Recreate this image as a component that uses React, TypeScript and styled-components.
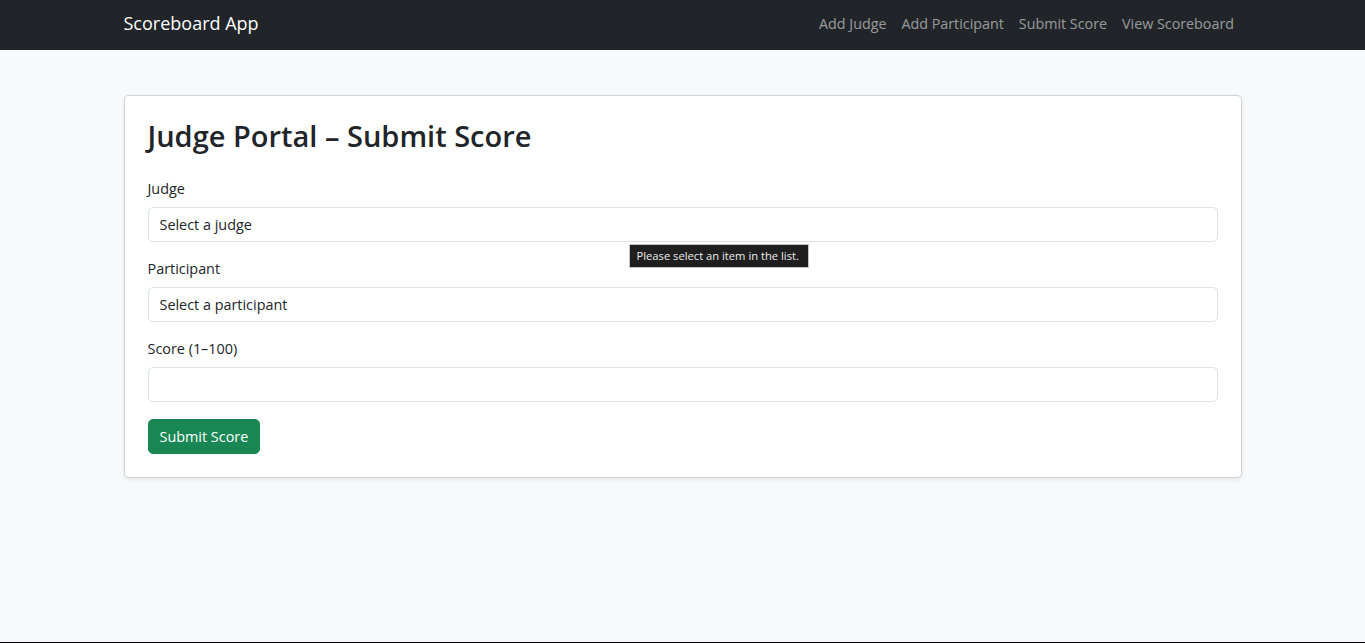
import React from "react";
import styled, { createGlobalStyle } from "styled-components";

const FONT = `"Open Sans", "Noto Sans", "Liberation Sans", sans-serif`;

const GlobalStyle = createGlobalStyle`
  * { box-sizing: border-box; }
  html, body { margin: 0; padding: 0; }
  body {
    background: #f8f9fa;
    font-family: ${FONT};
    color: #212529;
  }
`;

const Page = styled.div`
  min-height: 643px;
  border-bottom: 1px solid #000;
  background: #f8f9fa;
  display: flex;
  flex-direction: column;
`;

const NavBar = styled.nav`
  height: 50px;
  background: #212529;
  display: flex;
  justify-content: center;
`;

const NavInner = styled.div`
  width: 1142px;
  padding: 0 12px;
  display: flex;
  align-items: center;
  justify-content: space-between;
`;

const Brand = styled.a`
  color: #fff;
  font-size: 18px;
  line-height: 28px;
  text-decoration: none;
  margin-top: -4px;
`;

const NavLinks = styled.ul`
  list-style: none;
  margin: -2px 0 0 0;
  padding: 0;
  display: flex;
`;

const NavLink = styled.a`
  display: block;
  padding: 0 7.5px;
  font-size: 14.3px;
  line-height: 22px;
  color: rgba(255, 255, 255, 0.55);
  text-decoration: none;
`;

const Main = styled.main`
  display: flex;
  justify-content: center;
  padding-top: 45px;
`;

const Container = styled.div`
  width: 1142px;
  padding: 0 12px;
`;

const Card = styled.div`
  background: #fff;
  border: 1px solid rgba(0, 0, 0, 0.175);
  border-radius: 5px;
  box-shadow: 0 2px 4px rgba(0, 0, 0, 0.075);
  padding: 22px 23px 23px;
`;

const Title = styled.h2`
  margin: 0 0 25px;
  font-size: 29px;
  line-height: 35px;
  font-weight: 600;
  color: #212529;
`;

const Group = styled.div`
  margin-bottom: 16px;
  position: relative;
`;

const Label = styled.label`
  display: block;
  font-size: 14.4px;
  line-height: 22px;
  margin-bottom: 7px;
  color: #212529;
`;

const fieldCss = `
  display: block;
  width: 100%;
  height: 35px;
  padding: 0 11px;
  font-family: ${FONT};
  font-size: 14.4px;
  color: #212529;
  background: #fff;
  border: 1px solid #dee2e6;
  border-radius: 5px;
  outline: none;
  appearance: none;
  -webkit-appearance: none;
  -moz-appearance: textfield;
`;

const Select = styled.select`
  ${fieldCss}
`;

const Input = styled.input`
  ${fieldCss}
  &::-webkit-outer-spin-button,
  &::-webkit-inner-spin-button {
    -webkit-appearance: none;
    margin: 0;
  }
`;

const Tooltip = styled.div`
  position: absolute;
  left: 481px;
  top: 66px;
  width: 180px;
  height: 24px;
  background: #1f1f1f;
  border: 1px solid #c4c4c4;
  color: #ececec;
  font-size: 11.2px;
  line-height: 22px;
  padding: 0 7px;
  white-space: nowrap;
  z-index: 2;
`;

const SubmitButton = styled.button`
  height: 35px;
  margin-top: 1px;
  padding: 0 11px;
  font-family: ${FONT};
  font-size: 14.4px;
  color: #fff;
  background: #198754;
  border: 1px solid #198754;
  border-radius: 5px;
  cursor: pointer;
`;

const links = ["Add Judge", "Add Participant", "Submit Score", "View Scoreboard"];

export default function App() {
  return (
    <>
      <GlobalStyle />
      <Page>
        <NavBar>
          <NavInner>
            <Brand href="#">Scoreboard App</Brand>
            <NavLinks>
              {links.map((l) => (
                <li key={l}>
                  <NavLink href="#">{l}</NavLink>
                </li>
              ))}
            </NavLinks>
          </NavInner>
        </NavBar>
        <Main>
          <Container>
            <Card>
              <Title>Judge Portal – Submit Score</Title>
              <form onSubmit={(e) => e.preventDefault()}>
                <Group>
                  <Label>Judge</Label>
                  <Select defaultValue="">
                    <option value="">Select a judge</option>
                  </Select>
                  <Tooltip>Please select an item in the list.</Tooltip>
                </Group>
                <Group>
                  <Label>Participant</Label>
                  <Select defaultValue="">
                    <option value="">Select a participant</option>
                  </Select>
                </Group>
                <Group>
                  <Label>Score (1–100)</Label>
                  <Input type="number" />
                </Group>
                <SubmitButton type="submit">Submit Score</SubmitButton>
              </form>
            </Card>
          </Container>
        </Main>
      </Page>
    </>
  );
}
